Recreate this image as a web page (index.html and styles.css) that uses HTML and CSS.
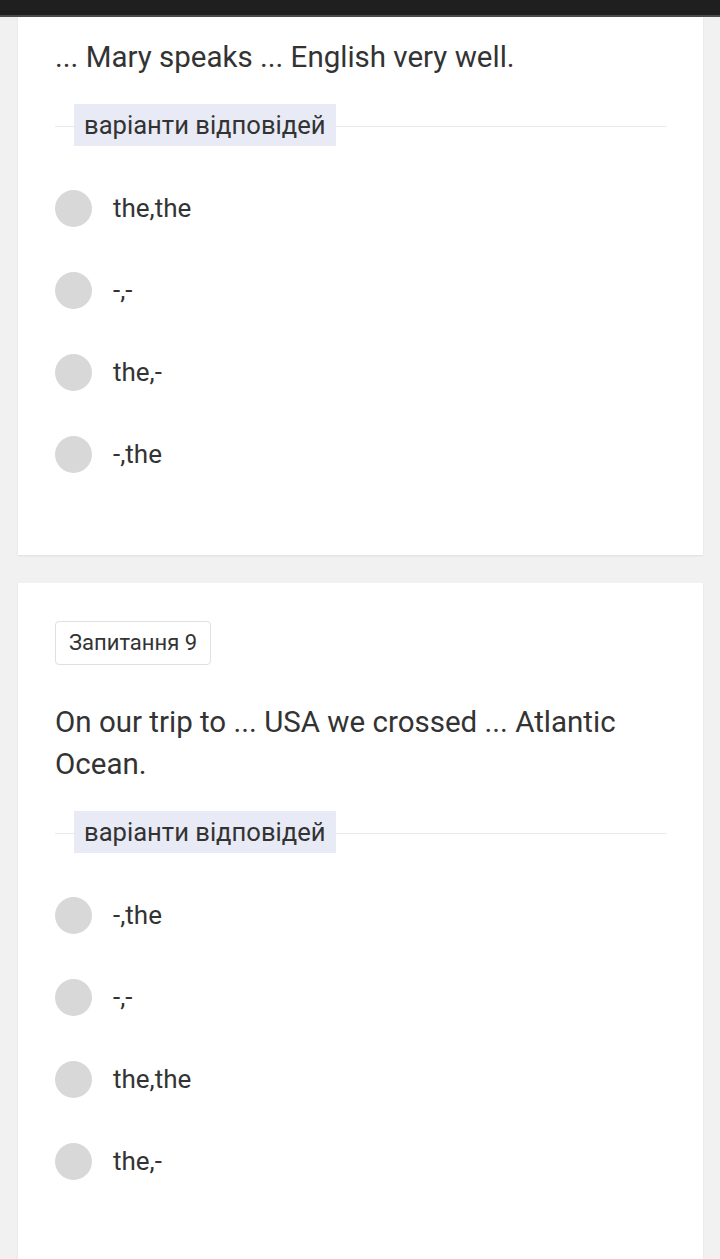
FILE: index.html
```html
<!DOCTYPE html>
<html lang="uk">
<head>
    <meta charset="UTF-8">
    <meta name="viewport" content="width=device-width, initial-scale=1.0">
    <title>Тест</title>
    <link rel="stylesheet" href="styles.css">
</head>
<body>
    <div class="topbar"></div>

    <section class="card card-first">
        <p class="question">... Mary speaks ... English very well.</p>
        <div class="answers-title"><span>варіанти відповідей</span></div>
        <ul class="options">
            <li><span class="radio"></span>the,the</li>
            <li><span class="radio"></span>-,-</li>
            <li><span class="radio"></span>the,-</li>
            <li><span class="radio"></span>-,the</li>
        </ul>
    </section>

    <section class="card">
        <div class="number">Запитання 9</div>
        <p class="question">On our trip to ... USA we crossed ... Atlantic Ocean.</p>
        <div class="answers-title"><span>варіанти відповідей</span></div>
        <ul class="options">
            <li><span class="radio"></span>-,the</li>
            <li><span class="radio"></span>-,-</li>
            <li><span class="radio"></span>the,the</li>
            <li><span class="radio"></span>the,-</li>
        </ul>
    </section>
</body>
</html>
```

FILE: styles.css
```css
body {
    margin: 0;
    background: #f1f1f1;
    font-family: Roboto, "Noto Sans", sans-serif;
    color: #333;
}

.topbar {
    height: 15px;
    background: #1f1f1f;
    border-bottom: 2px solid #4b4b4b;
}

.card {
    background: #fff;
    margin: 28px 17px 0 18px;
    padding: 38px 37px 60px;
    box-shadow: 0 1px 2px rgba(0, 0, 0, 0.08);
}

.card-first {
    margin-top: 0;
    padding-top: 19px;
}

.number {
    display: inline-block;
    border: 1px solid #e0e0e0;
    border-radius: 4px;
    padding: 0 13px;
    height: 42px;
    line-height: 42px;
    font-size: 22px;
    margin-bottom: 36px;
}

.question {
    margin: 0;
    font-size: 29.5px;
    line-height: 42px;
}

.answers-title {
    position: relative;
    margin-top: 26px;
    padding-left: 19px;
}

.answers-title::before {
    content: "";
    position: absolute;
    left: 0;
    right: 0;
    top: 22px;
    border-top: 1px solid #e9e9e9;
}

.answers-title span {
    position: relative;
    display: inline-block;
    background: #e8eaf6;
    padding: 0 10px;
    height: 42px;
    line-height: 42px;
    font-size: 25.6px;
}

.options {
    list-style: none;
    margin: 21px 0 0;
    padding: 0;
}

.options li {
    display: flex;
    align-items: center;
    height: 82px;
    font-size: 26px;
}

.radio {
    width: 37px;
    height: 37px;
    border-radius: 50%;
    background: #d8d8d8;
    margin-right: 21px;
    flex-shrink: 0;
}
```
